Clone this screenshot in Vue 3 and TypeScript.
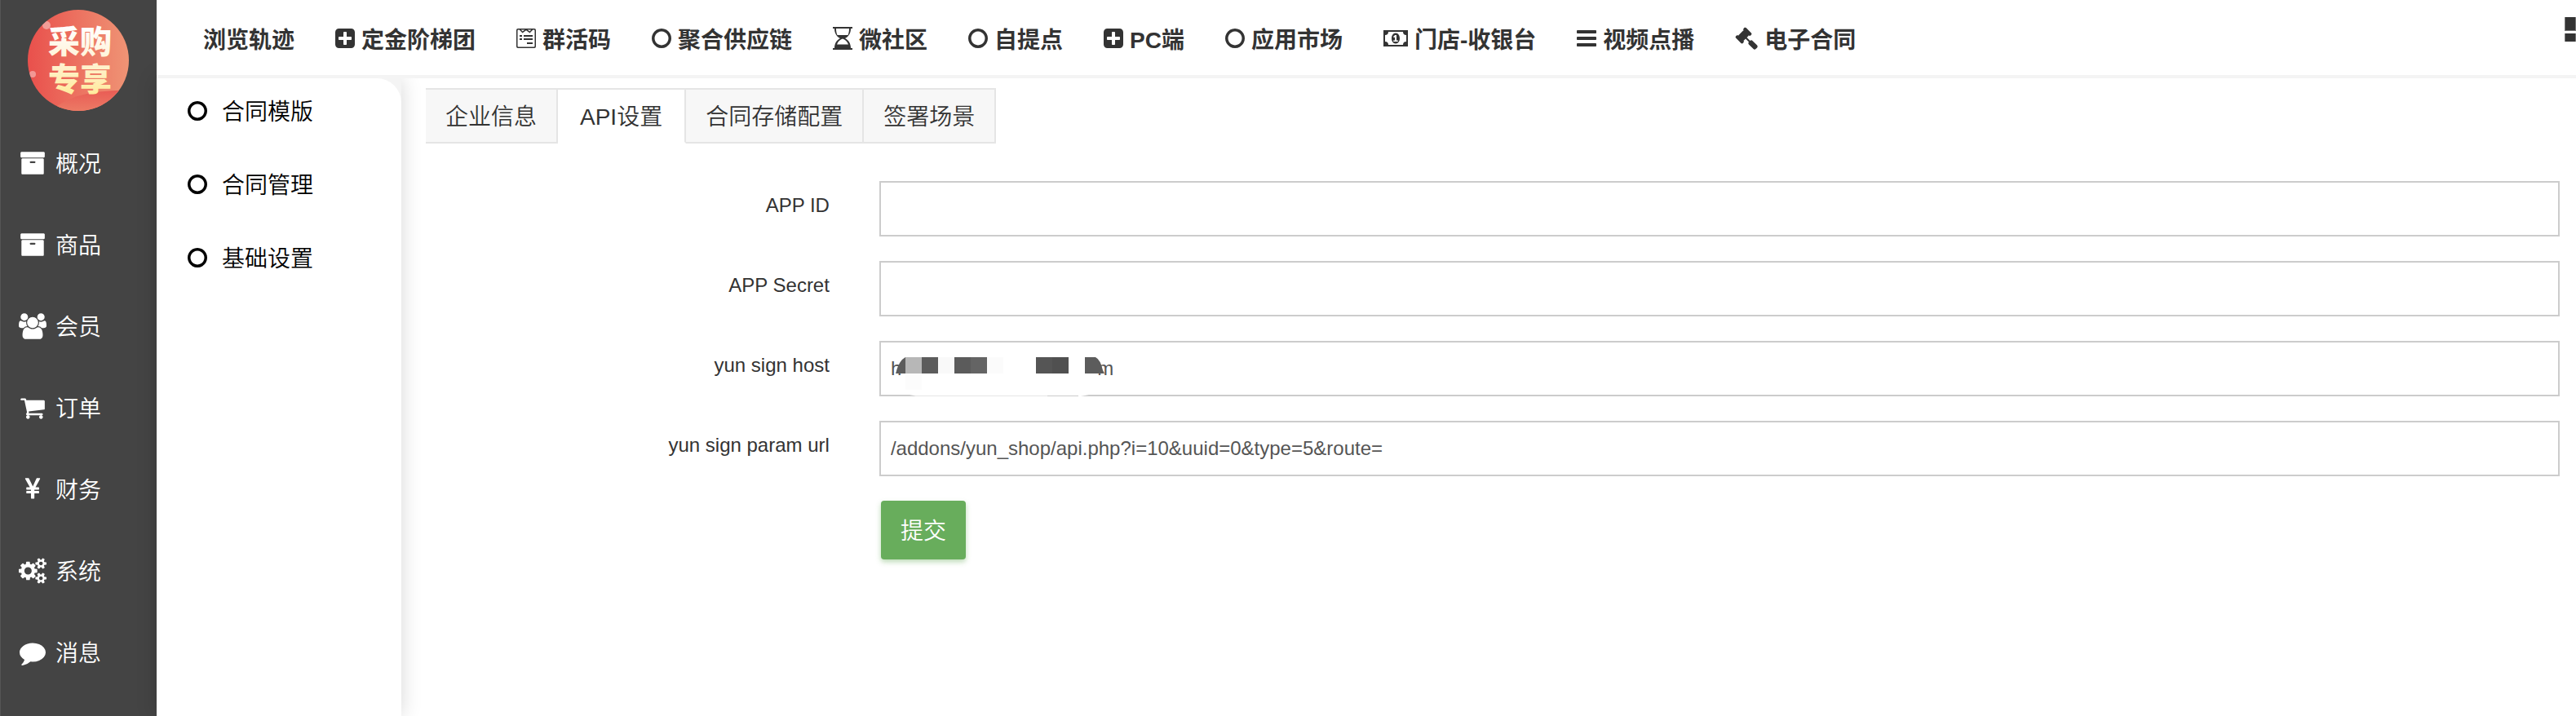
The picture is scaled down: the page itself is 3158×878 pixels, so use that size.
<script setup lang="ts">
import { ref } from 'vue'

interface Shape {
  box: string
  w: number
  h: number
  d: string
}

interface NavItem {
  label: string
  icon?: string
}

const shapes: Record<string, Shape> = {
  archive: {
    box: '0 0 1792 1792',
    w: 32,
    h: 32,
    d: 'M1088 832q0-26-19-45t-45-19h-256q-26 0-45 19t-19 45 19 45 45 19h256q26 0 45-19t19-45zm576-192v960q0 26-19 45t-45 19h-1408q-26 0-45-19t-19-45v-960q0-26 19-45t45-19h1408q26 0 45 19t19 45zm64-448v256q0 26-19 45t-45 19h-1536q-26 0-45-19t-19-45v-256q0-26 19-45t45-19h1536q26 0 45 19t19 45z',
  },
  users: {
    box: '64 0 1920 1792',
    w: 34,
    h: 32,
    d: 'M657 896q-162 5-265 128h-134q-82 0-138-40.5t-56-118.5q0-353 124-353 6 0 43.5 21t97.5 42.5 119 21.5q67 0 133-23-5 37-5 66 0 139 81 256zm1071 637q0 120-73 189.5t-194 69.5h-874q-121 0-194-69.5t-73-189.5q0-53 3.5-103.5t14-109 26.5-108.5 43-97.5 62-81 85.5-53.5 111.5-20q10 0 43 21.5t73 48 107 48 135 21.5 135-21.5 107-48 73-48 43-21.5q61 0 111.5 20t85.5 53.5 62 81 43 97.5 26.5 108.5 14 109 3.5 103.5zm-1024-1277q0 106-75 181t-181 75-181-75-75-181 75-181 181-75 181 75 75 181zm704 384q0 159-112.5 271.5t-271.5 112.5-271.5-112.5-112.5-271.5 112.5-271.5 271.5-112.5 271.5 112.5 112.5 271.5zm576 225q0 78-56 118.5t-138 40.5h-134q-103-123-265-128 81-117 81-256 0-29-5-66 66 23 133 23 59 0 119-21.5t97.5-42.5 43.5-21q124 0 124 353zm-128-609q0 106-75 181t-181 75-181-75-75-181 75-181 181-75 181 75 75 181z',
  },
  cart: {
    box: '0 0 1792 1792',
    w: 32,
    h: 32,
    d: 'M704 1536q0 52-38 90t-90 38-90-38-38-90 38-90 90-38 90 38 38 90zm896 0q0 52-38 90t-90 38-90-38-38-90 38-90 90-38 90 38 38 90zm128-1088v512q0 24-16.500 42.500t-40.500 21.500l-1044 122q13 60 13 70 0 16-24 64h920q26 0 45 19t19 45-19 45-45 19h-1024q-26 0-45-19t-19-45q0-11 8-31.500t16-36 21.500-40 15.500-29.500l-177-823h-204q-26 0-45-19t-19-45 19-45 45-19h256q16 0 28.500 6.500t19.500 15.500 13 24.500 8 26 5.500 29.500 4.500 26h1201q26 0 45 19t19 45z',
  },
  yen: {
    box: '0 0 1792 1792',
    w: 32,
    h: 32,
    d: 'M985.5 1536h-172q-13 0-22.500-9t-9.500-23v-330h-288q-13 0-22.500-9t-9.500-23v-103q0-13 9.500-22.500t22.500-9.500h288v-85h-288q-13 0-22.500-9t-9.500-23v-104q0-13 9.500-22.500t22.500-9.500h214l-321-578q-8-16 0-32 10-16 28-16h194q19 0 29 18l215 425q19 38 56 125 10-24 30.500-68t27.500-61l191-420q8-19 29-19h191q17 0 27 16 9 14 1 31l-313 579h215q13 0 22.500 9.500t9.500 22.500v104q0 14-9.500 23t-22.500 9h-290v85h290q13 0 22.500 9.500t9.500 22.500v103q0 14-9.500 23t-22.500 9h-290v330q0 13-9.500 22.500t-22.500 9.500z',
  },
  cogs: {
    box: '0 0 1920 1792',
    w: 34,
    h: 32,
    d: 'M896 896q0-106-75-181t-181-75-181 75-75 181 75 181 181 75 181-75 75-181zm768 512q0-52-38-90t-90-38-90 38-38 90q0 53 37.500 90.500t90.500 37.500 90.500-37.500 37.500-90.500zm0-1024q0-52-38-90t-90-38-90 38-38 90q0 53 37.500 90.500t90.500 37.500 90.500-37.500 37.500-90.500zm-384 421v185q0 10-7 19.500t-16 10.500l-155 24q-11 35-32 76 34 48 90 115 7 11 7 20 0 12-7 19-23 30-82.500 89.500t-78.500 59.500q-11 0-21-7l-115-90q-37 19-77 31-11 108-23 155-7 24-30 24h-186q-11 0-20-7.500t-10-17.500l-23-153q-34-10-75-31l-118 89q-7 7-20 7-11 0-21-8-144-133-144-160 0-9 7-19 10-14 41-53t47-61q-23-44-35-82l-152-24q-10-1-17-9.500t-7-19.500v-185q0-10 7-19.500t16-10.500l155-24q11-35 32-76-34-48-90-115-7-11-7-20 0-12 7-20 22-30 82-89t79-59q11 0 21 7l115 90q34-18 77-32 11-108 23-154 7-24 30-24h186q11 0 20 7.500t10 17.500l23 153q34 10 75 31l118-89q8-7 20-7 11 0 21 8 144 133 144 160 0 8-7 19-12 16-42 54t-45 60q23 48 34 82l152 23q10 2 17 10.500t7 19.500zm640 533v140q0 16-149 31-12 27-30 52 51 113 51 138 0 4-4 7-122 71-124 71-8 0-46-47t-52-68q-20 2-30 2t-30-2q-14 21-52 68t-46 47q-2 0-124-71-4-3-4-7 0-25 51-138-18-25-30-52-149-15-149-31v-140q0-16 149-31 13-29 30-52-51-113-51-138 0-4 4-7 4-2 35-20t59-34 30-16q8 0 46 46.500t52 67.500q20-2 30-2t30 2q51-71 92-112l6-2q4 0 124 70 4 3 4 7 0 25-51 138 17 23 30 52 149 15 149 31zm0-1024v140q0 16-149 31-12 27-30 52 51 113 51 138 0 4-4 7-122 71-124 71-8 0-46-47t-52-68q-20 2-30 2t-30-2q-14 21-52 68t-46 47q-2 0-124-71-4-3-4-7 0-25 51-138-18-25-30-52-149-15-149-31v-140q0-16 149-31 13-29 30-52-51-113-51-138 0-4 4-7 4-2 35-20t59-34 30-16q8 0 46 46.500t52 67.500q20-2 30-2t30 2q51-71 92-112l6-2q4 0 124 70 4 3 4 7 0 25-51 138 17 23 30 52 149 15 149 31z',
  },
  comment: {
    box: '0 0 1792 1792',
    w: 32,
    h: 32,
    d: 'M1792 896q0 174-120 321.500t-326 233-450 85.500q-70 0-145-8-198 175-460 242-49 14-114 22-17 2-30.500-9t-17.500-29v-1q-3-4-.5-12t2-10 4.500-9.500l6-9 7-8.500 8-9q7-8 31-34.500t34.500-38 31-39.500 32.500-51 27-59 26-76q-157-89-247.500-220t-90.500-281q0-130 71-248.500t191-204.500 286-136.500 348-50.500q244 0 450 85.500t326 233 120 321.500z',
  },
  plus: {
    box: '128 0 1536 1792',
    w: 24,
    h: 28,
    d: 'M1408 960v-128q0-26-19-45t-45-19h-320v-320q0-26-19-45t-45-19h-128q-26 0-45 19t-19 45v320h-320q-26 0-45 19t-19 45v128q0 26 19 45t45 19h320v320q0 26 19 45t45 19h128q26 0 45-19t19-45v-320h320q26 0 45-19t19-45zm256-544v960q0 119-84.500 203.500t-203.500 84.500h-960q-119 0-203.500-84.500t-84.500-203.500v-960q0-119 84.500-203.500t203.500-84.500h960q119 0 203.500 84.500t84.500 203.500z',
  },
  circle: {
    box: '128 0 1536 1792',
    w: 24,
    h: 28,
    d: 'M896 352q-148 0-273 73t-198 198-73 273 73 273 198 198 273 73 273-73 198-198 73-273-73-273-198-198-273-73zm768 544q0 209-103 385.500t-279.500 279.500-385.500 103-385.500-103-279.500-279.500-103-385.500 103-385.500 279.500-279.500 385.500-103 385.500 103 279.500 279.500 103 385.500z',
  },
  bars: {
    box: '128 0 1536 1792',
    w: 24,
    h: 28,
    d: 'M1664 1344v128q0 26-19 45t-45 19h-1408q-26 0-45-19t-19-45v-128q0-26 19-45t45-19h1408q26 0 45 19t19 45zm0-512v128q0 26-19 45t-45 19h-1408q-26 0-45-19t-19-45v-128q0-26 19-45t45-19h1408q26 0 45 19t19 45zm0-512v128q0 26-19 45t-45 19h-1408q-26 0-45-19t-19-45v-128q0-26 19-45t45-19h1408q26 0 45 19t19 45z',
  },
  gavel: {
    box: '0 0 1792 1792',
    w: 28,
    h: 28,
    d: 'M1771 1536q0 53-37 90l-107 108q-39 37-91 37-53 0-90-37l-363-364q-38-36-38-90 0-53 43-96l-256-256-126 126q-14 14-34 14t-34-14q2 2 12.500 12t12.500 13 10 11.500 10 13.500 6 13.500 5.500 16.500 1.500 18q0 38-28 68-3 3-16.500 18t-19 20.500-18.500 16.500-22 15.500-22 9-26 4.500q-40 0-68-28l-408-408q-28-28-28-68 0-13 4.500-26t9-22 15.500-22 16.500-18.500 20.500-19 18-16.500q30-28 68-28 10 0 18 1.500t16.500 5.500 13.500 6 13.500 10 11.500 10 13 12.500 12 12.500q-14-14-14-34t14-34l348-348q14-14 34-14t34 14q-2-2-12.500-12t-12.500-13-10-11.500-10-13.500-6-13.500-5.500-16.500-1.500-18q0-38 28-68 3-3 16.500-18t19-20.500 18.500-16.500 22-15.500 22-9 26-4.500q40 0 68 28l408 408q28 28 28 68 0 13-4.500 26t-9 22-15.500 22-16.500 18.500-20.500 19-18 16.500q-30 28-68 28-10 0-18-1.500t-16.500-5.500-13.500-6-13.500-10-11.500-10-13-12.500-12-12.500q14 14 14 34t-14 34l-126 126 256 256q43-43 96-43 52 0 91 37l363 363q37 39 37 91z',
  },
  hourglass: {
    box: '0 0 24 28',
    w: 24,
    h: 28,
    d: 'M0 0h24v2h-2c0 6-3 10-7 12 4 2 7 6 7 12h2v2H0v-2h2c0-6 3-10 7-12C5 12 2 8 2 2H0zM4 2c0 3.500.6 6 1.500 8h13C19.400 8 20 5.500 20 2zM12 14.500C9 15.300 6.200 18 5 21.500h14C17.800 18 15 15.300 12 14.500z',
  },
  form: {
    box: '0 0 24 28',
    w: 24,
    h: 28,
    d: 'M2 2h20a2 2 0 0 1 2 2v20a2 2 0 0 1-2 2H2a2 2 0 0 1-2-2V4a2 2 0 0 1 2-2zm.5 1.500a1 1 0 0 0-1 1v19a1 1 0 0 0 1 1h19a1 1 0 0 0 1-1v-19a1 1 0 0 0-1-1h-1.200L16.500 7.500 12 4.300 7.500 7.500 3.700 3.500zM5.800 3.500 7.600 5.500 10.400 3.500zM13.600 3.500 16.400 5.500 18.200 3.500zM4 10h3v2H4zM9 10h11v2H9zM4 14h3v2H4zM9 14h11v2H9zM13 19h7v2h-7z',
  },
  money: {
    box: '0 0 30 28',
    w: 30,
    h: 28,
    d: 'M0 4h30v20H0zM6 6a4 4 0 0 1-4 4v8a4 4 0 0 1 4 4h18a4 4 0 0 1 4-4v-8a4 4 0 0 1-4-4zM15 7.500c3.200 0 5 3 5 6.500s-1.800 6.500-5 6.500-5-3-5-6.500 1.800-6.500 5-6.500zM14.200 10 12 12l1 1.200 1-.8V16.500h-1.800V18h5.600v-1.500H16V10z',
  },
}

const mainNav: NavItem[] = [
  { label: '概况', icon: 'archive' },
  { label: '商品', icon: 'archive' },
  { label: '会员', icon: 'users' },
  { label: '订单', icon: 'cart' },
  { label: '财务', icon: 'yen' },
  { label: '系统', icon: 'cogs' },
  { label: '消息', icon: 'comment' },
]

const topNav: NavItem[] = [
  { label: '浏览轨迹' },
  { label: '定金阶梯团', icon: 'plus' },
  { label: '群活码', icon: 'form' },
  { label: '聚合供应链', icon: 'circle' },
  { label: '微社区', icon: 'hourglass' },
  { label: '自提点', icon: 'circle' },
  { label: 'PC端', icon: 'plus' },
  { label: '应用市场', icon: 'circle' },
  { label: '门店-收银台', icon: 'money' },
  { label: '视频点播', icon: 'bars' },
  { label: '电子合同', icon: 'gavel' },
]

const subNav = ['合同模版', '合同管理', '基础设置']
const tabs = ['企业信息', 'API设置', '合同存储配置', '签署场景']
const activeTab = ref('API设置')

const fields = ref([
  { id: 'app-id', label: 'APP ID', value: '' },
  { id: 'app-secret', label: 'APP Secret', value: '' },
  { id: 'sign-host', label: 'yun sign host', value: 'h' + '\u00a0'.repeat(36) + 'm', masked: true },
  { id: 'sign-url', label: 'yun sign param url', value: '/addons/yun_shop/api.php?i=10&uuid=0&type=5&route=' },
])
</script>

<template>
  <div class="page">
    <aside class="sidebar">
      <svg class="logo" viewBox="0 0 124 124" role="img" aria-label="采购专享">
        <defs>
          <linearGradient id="disc" x1="0" x2="1">
            <stop offset="0" stop-color="#e9504c" />
            <stop offset="1" stop-color="#ef9475" />
          </linearGradient>
          <linearGradient id="wave" x1="0" x2="0" y1="0" y2="1">
            <stop offset="0" stop-color="#e95c55" />
            <stop offset="1" stop-color="#ec7a65" />
          </linearGradient>
          <linearGradient id="gold" gradientUnits="userSpaceOnUse" x1="0" x2="0" y1="20" y2="104">
            <stop offset="0" stop-color="#ffffff" />
            <stop offset="0.5" stop-color="#fff3d6" />
            <stop offset="1" stop-color="#ffeb9c" />
          </linearGradient>
          <clipPath id="round"><circle cx="62" cy="62" r="62" /></clipPath>
        </defs>
        <g clip-path="url(#round)">
          <rect width="124" height="124" fill="url(#disc)" />
          <path d="M36 118C56 104 84 98 124 99v25H36z" fill="url(#wave)" />
          <circle cx="23" cy="19" r="5" fill="#fff" opacity="0.4" />
          <circle cx="6" cy="79" r="4" fill="#fff" opacity="0.4" />
        </g>
        <text class="logo-text" x="25" y="53" fill="url(#gold)">采购</text>
        <text class="logo-text" x="25" y="99" fill="url(#gold)">专享</text>
      </svg>
      <nav class="main-nav">
        <a v-for="item in mainNav" :key="item.label" href="#" class="main-link">
          <span class="main-icon">
            <svg :viewBox="shapes[item.icon!].box" :width="shapes[item.icon!].w" :height="shapes[item.icon!].h" aria-hidden="true">
              <path :d="shapes[item.icon!].d" />
            </svg>
          </span>
          <span class="text">{{ item.label }}</span>
        </a>
      </nav>
    </aside>

    <div class="workspace">
      <header class="topbar">
        <nav class="top-nav">
          <a v-for="item in topNav" :key="item.label" href="#" class="top-link">
            <svg v-if="item.icon" :viewBox="shapes[item.icon].box" :width="shapes[item.icon].w" :height="shapes[item.icon].h" aria-hidden="true">
              <path :d="shapes[item.icon].d" fill-rule="evenodd" />
            </svg>
            <span>{{ item.label }}</span>
          </a>
        </nav>
        <button type="button" class="more" aria-label="更多"><i></i><i></i></button>
      </header>

      <div class="body">
        <div class="subnav-wrap">
          <nav class="subnav">
            <a v-for="label in subNav" :key="label" href="#" class="sub-link">
              <svg :viewBox="shapes.circle.box" width="24" height="28" aria-hidden="true">
                <path :d="shapes.circle.d" />
              </svg>
              <span class="text">{{ label }}</span>
            </a>
          </nav>
        </div>

        <main class="content">
          <div class="tabs" role="tablist">
            <button
              v-for="tab in tabs"
              :key="tab"
              type="button"
              role="tab"
              class="tab"
              :class="{ active: tab === activeTab }"
              :aria-selected="tab === activeTab"
              @click="activeTab = tab"
            >{{ tab }}</button>
          </div>

          <form class="form" @submit.prevent>
            <div v-for="field in fields" :key="field.id" class="row">
              <label :for="field.id">{{ field.label }}</label>
              <div class="control">
                <input :id="field.id" v-model="field.value" type="text" />
                <svg v-if="field.masked" class="mask" width="270" height="48" viewBox="0 0 270 48" aria-hidden="true">
                  <path d="M0 20Q4 4 12 0v20z" fill="#5c5c5c" />
                  <rect x="12" width="20" height="20" fill="#b7b7b7" />
                  <rect x="12" y="20" width="20" height="20" fill="#fcfcfc" />
                  <rect x="32" width="20" height="20" fill="#5c5c5c" />
                  <rect x="52" width="20" height="20" fill="#f9f9f9" />
                  <rect x="72" width="20" height="20" fill="#5b5b5b" />
                  <rect x="92" width="20" height="20" fill="#646464" />
                  <rect x="112" width="20" height="20" fill="#fbfbfb" />
                  <rect x="172" width="20" height="20" fill="#555" />
                  <rect x="192" width="20" height="20" fill="#505050" />
                  <path d="M232 0h13q6 3 9 16l2 4h-24z" fill="#5c5c5c" />
                  <path d="M17 46h220l-10 2H27z" fill="#fff" />
                  <path d="M24 47h162v1H24z" fill="#e6e6e6" />
                  <path d="M186 47h38v1h-38z" fill="#ccc" />
                </svg>
              </div>
            </div>
            <div class="row">
              <div class="control actions">
                <button type="submit" class="submit">提交</button>
              </div>
            </div>
          </form>
        </main>
      </div>
    </div>
  </div>
</template>

<style>
body {
  margin: 0;
  background: #fff;
}
</style>

<style scoped>
.page {
  display: flex;
  min-height: 100vh;
  overflow: hidden;
  color: #333;
  font-family: "Liberation Sans", "Noto Sans CJK SC", sans-serif;
  font-size: 28px;
  font-weight: 350;
}

.page *,
.page {
  box-sizing: border-box;
}

a {
  color: inherit;
  text-decoration: none;
}

svg {
  display: block;
  flex: none;
  fill: currentColor;
}

button,
input {
  font-family: inherit;
  font-weight: inherit;
}

.sidebar {
  flex: none;
  width: 192px;
  padding-top: 12px;
  border-left: 1px solid #555;
  background: #444;
  color: #fff;
}

.logo {
  width: 124px;
  height: 124px;
  margin-left: 33px;
}

.logo-text {
  font-family: "Liberation Sans", "Noto Sans CJK SC", sans-serif;
  font-size: 39px;
  font-weight: 900;
}

.main-nav {
  display: flex;
  flex-direction: column;
  margin-top: 14px;
}

.main-link {
  display: flex;
  align-items: center;
  gap: 11px;
  height: 100px;
  padding-left: 22px;
}

.main-icon {
  display: flex;
  justify-content: center;
  width: 34px;
}

.text {
  padding-bottom: 2px;
}

.workspace {
  display: flex;
  flex: 1;
  flex-direction: column;
  min-width: 0;
}

.topbar {
  position: relative;
  z-index: 2;
  display: flex;
  justify-content: space-between;
  height: 96px;
  border-bottom: 4px solid #f4f4f4;
  background: #fff;
}

.top-nav {
  display: flex;
  gap: 50px;
  padding: 2px 0 0 57px;
}

.top-link {
  display: flex;
  align-items: center;
  gap: 8px;
  font-weight: bold;
  white-space: nowrap;
}

.more {
  display: flex;
  flex-direction: column;
  align-self: flex-start;
  gap: 3px;
  padding: 21px 0 0;
  border: 0;
  background: none;
}

.more i {
  width: 14px;
  height: 17px;
  border: 1px solid #777;
  border-top: 0;
  background: #333;
}

.more i + i {
  height: 10px;
  border-bottom: 0;
}

.body {
  display: flex;
  flex: 1;
}

.subnav-wrap {
  position: relative;
  z-index: 1;
  flex: none;
  width: 300px;
  background: #f4f4f4;
  box-shadow: 0 0 24px rgba(0, 0, 0, 0.16);
}

.subnav {
  display: flex;
  flex-direction: column;
  gap: 10px;
  height: 100%;
  border-top-right-radius: 30px;
  background: #fff;
  color: #000;
}

.sub-link {
  display: flex;
  align-items: center;
  gap: 18px;
  height: 80px;
  padding-left: 38px;
}

.content {
  flex: 1;
  min-width: 0;
  padding: 12px 20px 40px 30px;
}

.tabs {
  display: flex;
}

.tab {
  height: 68px;
  padding: 0 24px 2px;
  border: solid #e5e5e5;
  border-width: 2px 2px 2px 0;
  background: #f7f7f7;
  color: #333;
  font-size: 28px;
}

.tab.active {
  padding: 0 27px 2px;
  border-bottom-color: #fff;
  background: #fff;
}

.form {
  display: flex;
  flex-direction: column;
  gap: 30px;
  margin-top: 46px;
}

.row {
  display: grid;
  grid-template-columns: 21.25% 1fr;
}

label {
  padding-right: 61px;
  font-size: 24px;
  line-height: 60px;
  text-align: right;
}

.control {
  position: relative;
  grid-column: 2;
}

input {
  display: block;
  width: 100%;
  height: 68px;
  padding: 0 12px;
  border: 2px solid #ccc;
  border-radius: 0;
  background: #fff;
  color: #555;
  font-size: 24px;
}

.mask {
  position: absolute;
  top: 20px;
  left: 20px;
}

.actions {
  padding-left: 2px;
}

.submit {
  height: 72px;
  padding: 0 24px 2px;
  border: 0;
  border-radius: 4px;
  background: #68ad5c;
  box-shadow: 0 3px 6px rgba(104, 173, 92, 0.45);
  color: #fff;
  font-size: 28px;
}
</style>
